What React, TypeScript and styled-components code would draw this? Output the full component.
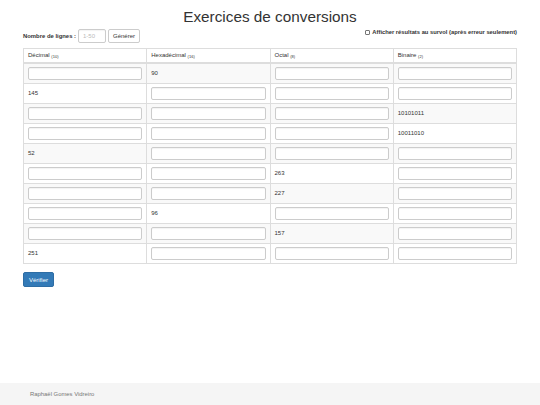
import styled, { createGlobalStyle } from 'styled-components';

const GlobalStyle = createGlobalStyle`
  html, body {
    margin: 0;
    padding: 0;
    background: #fff;
    font-family: "Liberation Sans", Arial, sans-serif;
    color: #333;
    font-size: 6px;
    line-height: 1.43;
  }
`;

const Page = styled.div`
  min-height: 405px;
  display: flex;
  flex-direction: column;
`;

const Container = styled.main`
  flex: 1;
  width: 494px;
  margin: 0 auto;
`;

const Title = styled.h1`
  margin: 6px 0 0;
  text-align: center;
  font-size: 15.3px;
  font-weight: 400;
  line-height: 22px;
  color: #333;
`;

const Toolbar = styled.div`
  display: flex;
  justify-content: space-between;
  align-items: flex-start;
  margin-top: 1px;
  height: 19px;
`;

const Form = styled.div`
  display: flex;
  align-items: center;
  gap: 2px;
`;

const Label = styled.label`
  font-weight: 700;
  font-size: 5.9px;
`;

const TextInput = styled.input<{ $w?: number }>`
  box-sizing: border-box;
  width: ${({ $w }) => ($w ? `${$w}px` : '100%')};
  height: ${({ $w }) => ($w ? '14px' : '13px')};
  padding: 0 4px;
  border: 1px solid #ccc;
  border-radius: 2px;
  font: inherit;
  font-size: 6px;
  color: #555;
  background: #fff;
  display: block;
  box-shadow: inset 0 1px 1px rgba(0, 0, 0, 0.05);

  &::placeholder {
    color: #bbb;
  }
`;

const Button = styled.button<{ $primary?: boolean }>`
  box-sizing: border-box;
  height: ${({ $primary }) => ($primary ? '15px' : '14px')};
  padding: 0 ${({ $primary }) => ($primary ? '5px' : '4px')};
  border: 1px solid ${({ $primary }) => ($primary ? '#2e6da4' : '#ccc')};
  border-radius: 2px;
  background: ${({ $primary }) => ($primary ? '#337ab7' : '#fff')};
  color: ${({ $primary }) => ($primary ? '#fff' : '#333')};
  font-family: inherit;
  font-size: 6px;
  cursor: pointer;
`;

const CheckLabel = styled.label`
  display: flex;
  align-items: center;
  gap: 2px;
  font-weight: 700;
  font-size: 5.8px;
  margin-top: -1px;
`;

const CheckBox = styled.input`
  appearance: none;
  margin: 0;
  width: 5px;
  height: 5px;
  border: 1px solid #767676;
  border-radius: 1px;
  background: #fff;
  box-sizing: border-box;
`;

const Table = styled.table`
  width: 100%;
  border-collapse: collapse;
  table-layout: fixed;
  border: 1px solid #ddd;
`;

const Th = styled.th`
  text-align: left;
  font-weight: 400;
  font-size: 6px;
  padding: 0 4px;
  height: 13px;
  border: 1px solid #ddd;
  border-bottom-width: 2px;

  sub {
    font-size: 4px;
    vertical-align: -1px;
  }
`;

const Row = styled.tr<{ $striped: boolean }>`
  background: ${({ $striped }) => ($striped ? '#f9f9f9' : '#fff')};
`;

const Td = styled.td`
  height: 19px;
  padding: 0 4px;
  border: 1px solid #ddd;
  font-size: 6px;
  vertical-align: middle;
`;

const Actions = styled.div`
  margin-top: 8px;
`;

const Footer = styled.footer`
  height: 22px;
  background: #f5f5f5;
  display: flex;
  align-items: center;
  padding-left: 30px;
  color: #777;
  font-size: 5.9px;
`;

const rows: (string | null)[][] = [
  [null, '90', null, null],
  ['145', null, null, null],
  [null, null, null, '10101011'],
  [null, null, null, '10011010'],
  ['52', null, null, null],
  [null, null, '263', null],
  [null, null, '227', null],
  [null, '96', null, null],
  [null, null, '157', null],
  ['251', null, null, null],
];

const headers: [string, string][] = [
  ['Décimal', '(10)'],
  ['Hexadécimal', '(16)'],
  ['Octal', '(8)'],
  ['Binaire', '(2)'],
];

export default function App() {
  return (
    <Page>
      <GlobalStyle />
      <Container>
        <Title>Exercices de conversions</Title>
        <Toolbar>
          <Form>
            <Label>Nombre de lignes :</Label>
            <TextInput $w={28} placeholder="1-50" />
            <Button>Générer</Button>
          </Form>
          <CheckLabel>
            <CheckBox type="checkbox" />
            Afficher résultats au survol (après erreur seulement)
          </CheckLabel>
        </Toolbar>
        <Table>
          <thead>
            <tr>
              {headers.map(([name, base]) => (
                <Th key={name}>
                  {name} <sub>{base}</sub>
                </Th>
              ))}
            </tr>
          </thead>
          <tbody>
            {rows.map((row, i) => (
              <Row key={i} $striped={i % 2 === 0}>
                {row.map((value, j) => (
                  <Td key={j}>{value ?? <TextInput />}</Td>
                ))}
              </Row>
            ))}
          </tbody>
        </Table>
        <Actions>
          <Button $primary>Vérifier</Button>
        </Actions>
      </Container>
      <Footer>Raphaël Gomes Vidreiro</Footer>
    </Page>
  );
}
